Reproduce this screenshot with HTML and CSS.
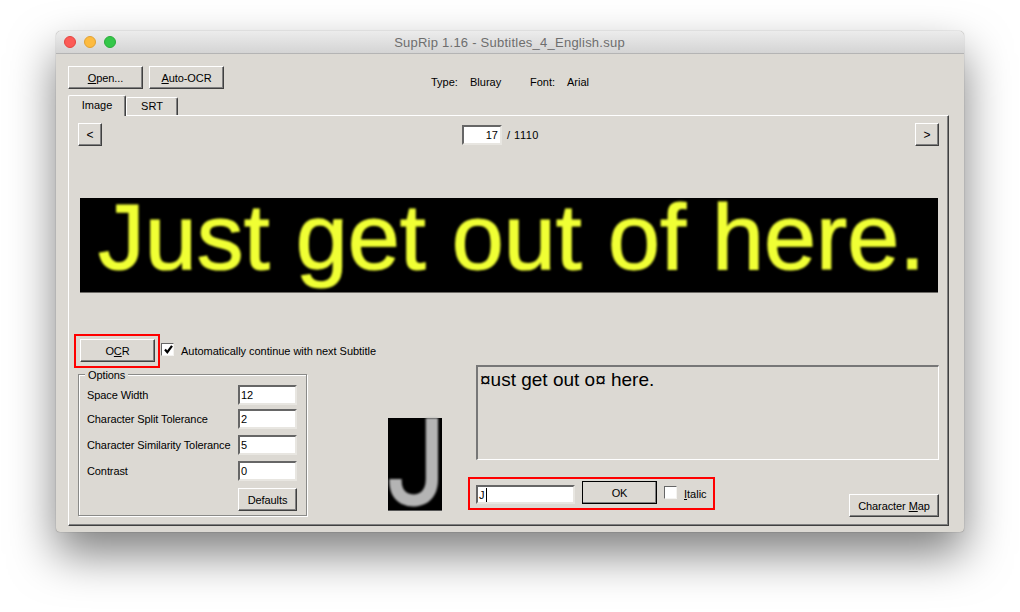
FILE: index.html
```html
<!DOCTYPE html>
<html lang="en">
<head>
<meta charset="utf-8">
<title>SupRip 1.16 - Subtitles_4_English.sup</title>
<link rel="stylesheet" href="styles.css">
</head>
<body>
<main class="window">
  <header class="titlebar">
    <div class="lights"><i class="light red"></i><i class="light amber"></i><i class="light green"></i></div>
    <div class="title">SupRip 1.16 - Subtitles_4_English.sup</div>
  </header>
  <div class="content">
    <div class="topbar">
      <button class="btn wide"><u>O</u>pen...</button>
      <button class="btn wide"><u>A</u>uto-OCR</button>
      <div class="meta">
        <span class="m-type">Type:</span><span class="m-bluray">Bluray</span><span class="m-font">Font:</span><span>Arial</span>
      </div>
    </div>
    <div class="tabs">
      <div class="tab active">Image</div>
      <div class="tab">SRT</div>
    </div>
    <section class="panel">
      <div class="nav">
        <button class="btn small">&lt;</button>
        <div class="pager"><div class="field page">17</div><span class="count">/ 1110</span></div>
        <button class="btn small next">&gt;</button>
      </div>
      <div class="banner"><span>Just get out of here.</span></div>
      <div class="lower">
        <div class="left">
          <div class="ocr-row">
            <div class="redbox ocr-box"><button class="btn wide"><span>O<u>C</u>R</span></button></div>
            <div class="check checked"><svg viewBox="0 0 11 11" width="11" height="11"><path d="M2 5.5 L4.3 8.2 L9 1.8" fill="none" stroke="#000" stroke-width="2.2"/></svg></div>
            <span class="auto-label">Automatically continue with next Subtitle</span>
          </div>
          <div class="options">
            <span class="legend">Options</span>
            <span>Space Width</span><div class="field">12</div>
            <span>Character Split Tolerance</span><div class="field">2</div>
            <span>Character Similarity Tolerance</span><div class="field">5</div>
            <span>Contrast</span><div class="field">0</div>
            <span></span><button class="btn defaults">Defaults</button>
          </div>
        </div>
        <div class="glyph"><span>J</span></div>
        <div class="right">
          <div class="ocr-text">¤ust get out o¤ here.</div>
          <div class="answer-row">
            <div class="redbox answer">
              <div class="field letter">J<i class="caret"></i></div>
              <button class="btn wide ok">OK</button>
              <div class="check"></div>
              <span class="italic"><u>I</u>talic</span>
            </div>
            <button class="btn charmap">Character <u>M</u>ap</button>
          </div>
        </div>
      </div>
    </section>
  </div>
</main>
</body>
</html>
```
FILE: styles.css
```css
* { box-sizing: border-box; }
html, body { margin: 0; height: 100%; background: #fff; overflow: hidden; }
body { padding: 31px 0 0 56px; font: 11px "Liberation Sans", Arial, sans-serif; color: #000; }

.window {
  width: 908px; height: 501px; background: #dcd9d3; border-radius: 5px 5px 4px 4px;
  box-shadow: 0 0 1px rgba(0,0,0,.55), 0 22px 46px rgba(0,0,0,.5);
}
.titlebar {
  height: 23px; display: flex; align-items: center; position: relative;
  background: linear-gradient(#ececec, #d4d4d4); border-bottom: 1px solid #b4b4b4;
  border-radius: 5px 5px 0 0;
}
.lights { display: flex; gap: 8px; padding-left: 8px; }
.light { width: 12px; height: 12px; border-radius: 50%; }
.red { background: #fc5b57; border: 1px solid #e5443f; }
.amber { background: #fdbb40; border: 1px solid #e2a232; }
.green { background: #34c749; border: 1px solid #2aac3a; }
.title {
  position: absolute; left: 0; right: 1px; text-align: center;
  font-size: 13px; color: #6e6e6e; letter-spacing: .24px;
}
.content { padding: 12px 15px 0 12px; }

.btn {
  display: block; padding: 0; margin: 0; height: 23px; background: #dcd9d3;
  font: inherit; letter-spacing: -.08px; color: #000; text-align: center;
  border: 1px solid; border-color: #fff #404040 #404040 #fff;
  box-shadow: inset -1px -1px 0 #808080;
}
.wide { width: 75px; }
.small { width: 24px; font-size: 12px; }
.topbar { display: flex; gap: 6px; height: 23px; }
.meta { display: flex; margin-left: 201px; padding-top: 10px; }
.m-type { width: 39px; }
.m-bluray { width: 60px; }
.m-font { width: 37px; }

.tabs { display: flex; align-items: flex-end; height: 20px; margin-top: 6px; }
.tab {
  width: 52px; height: 18px; text-align: center; line-height: 17px;
  border: 1px solid; border-color: #fff #404040 transparent #fff; border-bottom: 0;
  border-radius: 2px 2px 0 0; box-shadow: inset -1px 0 0 #808080;
}
.tab.active { width: 58px; height: 21px; line-height: 18px; margin-bottom: -1px; background: #dcd9d3; position: relative; }

.panel {
  width: 881px; height: 411px; padding: 7px 9px 0;
  border: 1px solid; border-color: #fff #404040 #404040 #fff;
  box-shadow: inset -1px -1px 0 #808080;
}
.nav { display: flex; height: 23px; }
.pager { display: flex; align-items: center; gap: 5px; margin-left: 360px; }
.count { letter-spacing: .5px; }
.next { margin-left: auto; }
.field {
  width: 59px; height: 20px; padding: 1px 0 0 1px; line-height: 15px; background: #fff;
  border: 2px solid; border-color: #666 #e8e6e1 #e8e6e1 #666;
}
.page { width: 40px; text-align: right; padding-right: 2px; }

.banner {
  width: 858px; height: 95px; margin: 52px 0 0 2px; background: #000;
  border-bottom: 1px solid #6c6a66; display: flex; align-items: flex-start;
}
.banner span {
  font-size: 93.6px; line-height: 90px; color: #f0ff34; padding-left: 18px; margin-top: -6px; white-space: nowrap;
  -webkit-text-stroke: 1.2px #f0ff34; filter: blur(.9px);
}

.lower { display: flex; margin: 41px 0 0 -4px; }
.left { width: 314px; }
.ocr-row { display: flex; align-items: center; height: 34px; }
.redbox { border: 2px solid #f00; }
.ocr-box { width: 86px; height: 34px; padding: 3px 0 0 4px; }
.check {
  width: 13px; height: 13px; background: #fff; padding: 0 0 0 1px;
  border: 1px solid; border-color: #666 #f4f3f0 #f4f3f0 #666; flex: none;
}
.check svg { display: block; }
.ocr-row .check { margin: -3px 0 0 1px; }
.auto-label { margin-left: 7px; white-space: nowrap; letter-spacing: -.03px; }

.options {
  position: relative; width: 229px; height: 142px; margin: 6px 0 0 4px; padding: 10px 0 0 8px;
  border: 1px solid #8a8a88; box-shadow: inset 1px 1px 0 #fff, 1px 1px 0 #fff;
  display: grid; grid-template-columns: 151px 59px; grid-template-rows: 24px 26px 26px 27px 23px;
  align-items: start;
}
.options > span { line-height: 20px; white-space: nowrap; letter-spacing: -.1px; }
.options > .legend {
  position: absolute; top: -6px; left: 6px; padding: 0 3px; line-height: 13px; background: #dcd9d3;
}
.defaults { width: 59px; }

.glyph {
  width: 54px; height: 93px; margin-top: 84px; background: #000;
  border-bottom: 1px solid #555;
}
.glyph span {
  display: block; width: 54px; font-family: Roboto, "Liberation Sans", sans-serif; font-size: 118px; line-height: 93px; letter-spacing: -9px;
  color: #b4b4b4; -webkit-text-stroke: 3px #b4b4b4; filter: blur(1px);
  transform: scaleX(.87); transform-origin: left center;
}

.right { width: 471px; margin-left: 26px; }
.ocr-text {
  width: 463px; height: 95px; margin: 31px 0 0 8px; padding: 2px 0 0 2px;
  font-size: 19px; line-height: 22px; border: 1px solid; border-width: 2px 1px 1px 2px;
  border-color: #777 #fff #fff #777;
}
.answer-row { display: flex; margin-top: 17px; }
.answer { display: flex; width: 247px; height: 33px; padding: 2px 0 0 6px; }
.letter { width: 99px; height: 19px; margin-top: 4px; padding-left: 1px; }
.caret { display: inline-block; width: 1px; height: 14px; background: #000; margin-left: 1px; vertical-align: -3px; }
.ok { margin-left: 7px; outline: 1px solid #000; outline-offset: -1px; }
.answer .check { margin: 5px 0 0 7px; }
.italic { margin: 7px 0 0 7px; }
.charmap { width: 90px; margin: 17px 0 0 auto; }
```
